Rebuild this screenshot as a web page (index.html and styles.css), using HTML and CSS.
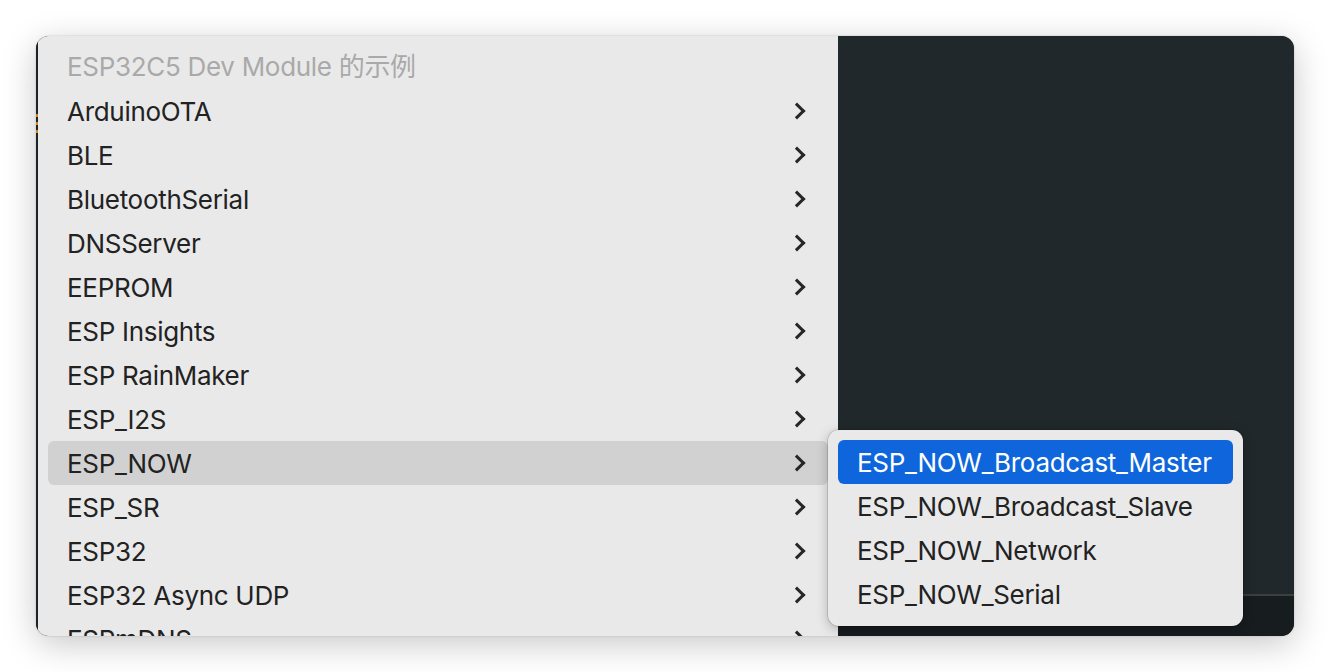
FILE: index.html
```html
<!DOCTYPE html>
<html lang="zh">
<head>
    <meta charset="UTF-8">
    <meta name="viewport" content="width=device-width, initial-scale=1.0">
    <title>Examples</title>
    <link rel="stylesheet" href="styles.css">
</head>
<body>
    <div class="window">
        <div class="editor-edge">
            <span class="mark"></span>
            <span class="mark"></span>
            <span class="mark"></span>
        </div>

        <div class="menu">
            <div class="menu-title">ESP32C5 Dev Module 的示例</div>
            <div class="menu-item"><span>ArduinoOTA</span><i class="chevron"></i></div>
            <div class="menu-item"><span>BLE</span><i class="chevron"></i></div>
            <div class="menu-item"><span>BluetoothSerial</span><i class="chevron"></i></div>
            <div class="menu-item"><span>DNSServer</span><i class="chevron"></i></div>
            <div class="menu-item"><span>EEPROM</span><i class="chevron"></i></div>
            <div class="menu-item"><span>ESP Insights</span><i class="chevron"></i></div>
            <div class="menu-item"><span>ESP RainMaker</span><i class="chevron"></i></div>
            <div class="menu-item"><span>ESP_I2S</span><i class="chevron"></i></div>
            <div class="menu-item active">
                <span>ESP_NOW</span><i class="chevron"></i>
                <!-- submenu opened from ESP_NOW -->
                <div class="submenu">
                    <div class="submenu-item selected">ESP_NOW_Broadcast_Master</div>
                    <div class="submenu-item">ESP_NOW_Broadcast_Slave</div>
                    <div class="submenu-item">ESP_NOW_Network</div>
                    <div class="submenu-item">ESP_NOW_Serial</div>
                </div>
            </div>
            <div class="menu-item"><span>ESP_SR</span><i class="chevron"></i></div>
            <div class="menu-item"><span>ESP32</span><i class="chevron"></i></div>
            <div class="menu-item"><span>ESP32 Async UDP</span><i class="chevron"></i></div>
            <div class="menu-item"><span>ESPmDNS</span><i class="chevron"></i></div>
        </div>

        <div class="editor">
            <div class="editor-body"></div>
            <div class="editor-footer"></div>
        </div>
    </div>
</body>
</html>
```

FILE: styles.css
```css
body {
    margin: 0;
    background: #ffffff;
    font-family: Inter, "Noto Sans CJK SC", sans-serif;
    padding: 36px;
    height: 672px;
    box-sizing: border-box;
}

.window {
    display: flex;
    width: 1258px;
    height: 600px;
    border-radius: 13px;
    overflow: hidden;
    background: #21282b;
    box-shadow: 0 8px 34px rgba(0, 0, 0, 0.22), 0 0 2px rgba(0, 0, 0, 0.2);
}

/* strip of the editor showing left of the menu */
.editor-edge {
    width: 2px;
    flex-shrink: 0;
    background: #1d2226;
    display: flex;
    flex-direction: column;
    gap: 5px;
    padding-top: 78px;
}

.mark {
    width: 2px;
    height: 3px;
    background: #d18a1a;
}

.menu {
    width: 800px;
    flex-shrink: 0;
    background: #e9e9e9;
    padding: 9px 10px 0 10px;
    box-sizing: border-box;
    font-size: 26px;
    letter-spacing: -0.3px;
    color: #222222;
}

.menu-title,
.menu-item {
    height: 44px;
    display: flex;
    align-items: center;
    padding: 0 22px 0 19px;
}

.menu-title {
    color: #a9a9a9;
    line-height: 30px;
}

.menu-item {
    justify-content: space-between;
    border-radius: 6px;
    position: relative;
}

.menu-item.active {
    background: #d1d1d1;
}

.chevron {
    width: 9px;
    height: 9px;
    border-right: 3px solid #262626;
    border-top: 3px solid #262626;
    transform: rotate(45deg);
    margin-right: 3px;
}

.submenu {
    position: absolute;
    left: 100%;
    top: -11px;
    width: 415px;
    padding: 10px;
    box-sizing: border-box;
    background: #e9e9e9;
    border-radius: 11px;
    box-shadow: 0 3px 12px rgba(0, 0, 0, 0.25), 0 0 0 1px rgba(0, 0, 0, 0.12);
    z-index: 5;
}

.submenu-item {
    height: 44px;
    display: flex;
    align-items: center;
    padding-left: 19px;
    border-radius: 6px;
    color: #222222;
}

.submenu-item.selected {
    background: #0f66dc;
    color: #ffffff;
}

.editor {
    flex: 1;
    display: flex;
    flex-direction: column;
}

.editor-body {
    flex: 1;
    background: #21282b;
}

.editor-footer {
    height: 40px;
    background: #171c1f;
    border-top: 2px solid #3a3f42;
}
```
